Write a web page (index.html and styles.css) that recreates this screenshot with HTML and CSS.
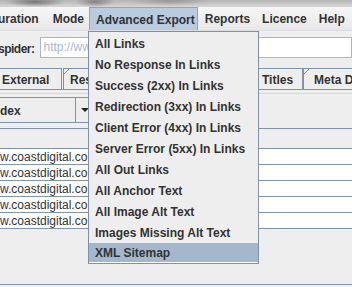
FILE: index.html
```html
<!DOCTYPE html>
<html>
<head>
<meta charset="utf-8">
<link rel="stylesheet" href="styles.css">
</head>
<body>
<div class="screen">
  <div class="titlebar"></div>
  <div class="menubar">
    <span class="mi mi-cut">uration</span>
    <span class="mi">Mode</span>
    <span class="mi mi-active">Advanced Export</span>
    <span class="mi">Reports</span>
    <span class="mi">Licence</span>
    <span class="mi">Help</span>
  </div>
  <div class="urlrow">
    <span class="label">spider:</span>
    <div class="input">http://www.coastdigital.co.uk</div>
  </div>
  <div class="tabs">
    <div class="tab tab-ext">External</div>
    <div class="tab tab-res">Response Codes</div>
    <div class="tab tab-titles">Titles</div>
    <div class="tab tab-meta">Meta Description</div>
  </div>
  <div class="panel">
    <div class="filter">
      <div class="combo">dex</div>
      <div class="combo-btn"><span class="arrow"></span></div>
    </div>
    <div class="thead"></div>
    <div class="rows">
      <div class="row">w.coastdigital.com/</div>
      <div class="row">w.coastdigital.com/</div>
      <div class="row">w.coastdigital.com/</div>
      <div class="row">w.coastdigital.com/</div>
      <div class="row">w.coastdigital.com/</div>
    </div>
  </div>
  <div class="statusline"></div>

  <div class="popup">
    <div class="item">All Links</div>
    <div class="item">No Response In Links</div>
    <div class="item">Success (2xx) In Links</div>
    <div class="item">Redirection (3xx) In Links</div>
    <div class="item">Client Error (4xx) In Links</div>
    <div class="item">Server Error (5xx) In Links</div>
    <div class="item">All Out Links</div>
    <div class="item">All Anchor Text</div>
    <div class="item">All Image Alt Text</div>
    <div class="item">Images Missing Alt Text</div>
    <div class="item item-sel">XML Sitemap</div>
  </div>
</div>
</body>
</html>
```

FILE: styles.css
```css
html, body {
  margin: 0;
  padding: 0;
  background: #eeeeee;
}
.screen {
  position: relative;
  width: 352px;
  height: 287px;
  overflow: hidden;
  background: #eeeeee;
  font-family: "Liberation Sans", Arial, sans-serif;
  font-size: 12px;
  color: #333333;
}
.titlebar {
  height: 7px;
  background:
    radial-gradient(ellipse 30px 5px at 35px 2px, rgba(60,60,60,0.55), rgba(60,60,60,0) 100%),
    radial-gradient(ellipse 20px 5px at 95px 2px, rgba(60,60,60,0.45), rgba(60,60,60,0) 100%),
    radial-gradient(ellipse 40px 5px at 170px 1px, rgba(90,90,90,0.35), rgba(90,90,90,0) 100%),
    linear-gradient(#b4b4b4, #d6d6d6);
}
.menubar {
  height: 23px;
  display: flex;
  align-items: stretch;
  background: linear-gradient(#f6f6f6, #e8e8e8);
  border-bottom: 1px solid #d8dde4;
  font-weight: bold;
}
.mi {
  display: flex;
  align-items: center;
  padding: 1px 5px 0 7px;
}
.mi-cut {
  margin-left: -9px;
  padding-right: 7px;
}
.mi-active {
  background: #b9cbde;
  border: 1px solid #8fa6c2;
  border-bottom: none;
  padding: 1px 2px 0 6px;
}
.urlrow {
  height: 33px;
  display: flex;
  align-items: center;
  gap: 5px;
}
.label {
  font-weight: bold;
  margin-left: -2px;
  letter-spacing: -0.5px;
  padding-top: 2px;
}
.input {
  flex: 1;
  height: 19px;
  line-height: 19px;
  background: #ffffff;
  border: 1px solid #a9b8c9;
  padding-left: 3px;
  color: #a5b8d2;
  white-space: nowrap;
  overflow: hidden;
}
.tabs {
  margin-top: 4px;
  height: 21px;
  display: flex;
  align-items: stretch;
  border-bottom: 1px solid #8193aa;
  font-weight: bold;
}
.tab {
  position: relative;
  box-sizing: border-box;
  border: 1px solid #8193aa;
  border-bottom: none;
  padding-left: 12px;
  padding-top: 2px;
  display: flex;
  align-items: center;
  white-space: nowrap;
  overflow: hidden;
  flex: none;
}
.tab::before {
  content: "";
  position: absolute;
  left: -1px;
  top: -1px;
  width: 7px;
  height: 7px;
  background: linear-gradient(to bottom right, #eeeeee 0, #eeeeee calc(50% - 0.6px), #8193aa calc(50% - 0.6px), #8193aa calc(50% + 0.6px), rgba(238,238,238,0) calc(50% + 0.6px));
}
.tab-ext { width: 73px; margin-left: -11px; }
.tab-res { width: 188px; margin-left: 1px; padding-left: 6px; }
.tab-titles { width: 52px; padding-left: 10px; }
.tab-meta { width: 80px; padding-left: 10px; }

.panel {
  border-top: 1px solid #ccd9e8;
  margin-top: 3px;
}
.filter {
  height: 35px;
  display: flex;
  align-items: flex-start;
  padding-top: 3px;
  box-sizing: border-box;
  border-bottom: 1px solid #8193aa;
}
.combo {
  width: 78px;
  height: 26px;
  box-sizing: border-box;
  border: 1px solid #8193aa;
  margin-left: -2px;
  display: flex;
  align-items: center;
  font-weight: bold;
  padding-left: 1px;
  padding-top: 2px;
}
.combo-btn {
  width: 20px;
  height: 26px;
  box-sizing: border-box;
  border: 1px solid #8193aa;
  border-left: none;
  display: flex;
  align-items: center;
  padding-left: 5px;
}
.arrow {
  width: 0;
  height: 0;
  border-left: 4px solid transparent;
  border-right: 4px solid transparent;
  border-top: 4px solid #222222;
}
.thead {
  height: 19px;
  border-bottom: 1px solid #8193aa;
}
.rows {
  background: #ffffff;
}
.row {
  height: 15px;
  line-height: 16px;
  border-bottom: 1px solid #8193aa;
  white-space: nowrap;
  overflow: hidden;
  padding-left: 0;
  color: #333333;
}
.statusline {
  position: absolute;
  left: 0;
  right: 0;
  top: 284px;
  height: 1px;
  background: #8193aa;
}

.popup {
  position: absolute;
  left: 88px;
  top: 31px;
  width: 171px;
  box-sizing: border-box;
  background: #eeeeee;
  border: 1px solid #7d91ad;
  padding-top: 1px;
  padding-bottom: 0;
  font-weight: bold;
}
.item {
  height: 21px;
  box-sizing: border-box;
  padding-top: 1px;
  line-height: 20px;
  padding-left: 6px;
  white-space: nowrap;
}
.item-sel {
  height: 20px;
  padding-top: 0;
  line-height: 20px;
  background: #a3b8cc;
  border-bottom: 1px solid #ffffff;
}
```
